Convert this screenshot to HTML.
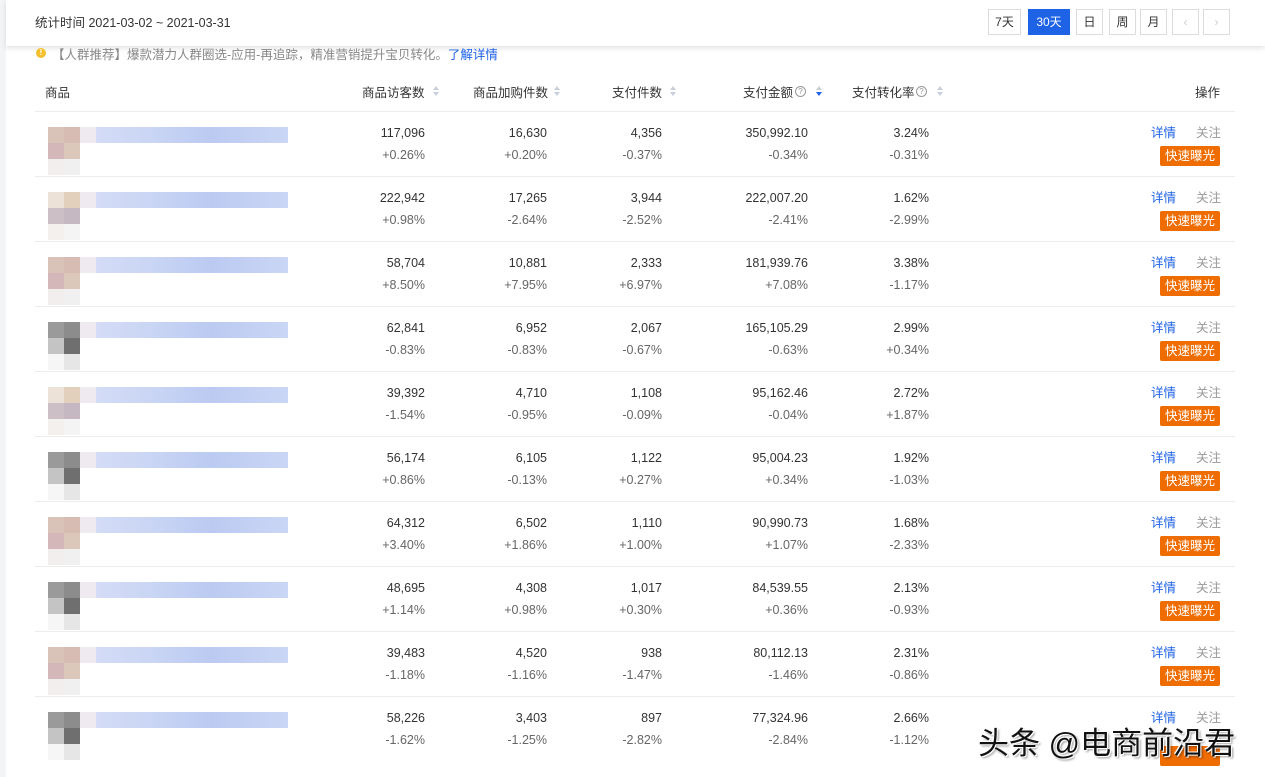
<!DOCTYPE html>
<html><head><meta charset="utf-8"><style>
*{margin:0;padding:0;box-sizing:border-box}
body{width:1265px;height:777px;background:#fff;position:relative;overflow:hidden;font-family:"Liberation Sans","Noto Sans CJK SC",sans-serif;font-size:12px;color:#333}
.a{position:absolute;white-space:nowrap}
.top{position:absolute;left:6px;top:0;width:1259px;height:46px;background:#fff;box-shadow:0 2px 5px rgba(0,0,0,.12)}
.lstrip{position:absolute;left:0;top:0;width:6px;height:777px;background:#f3f4f6}
.btn{position:absolute;top:9px;height:26px;border:1px solid #dcdcdc;background:#fff;font-size:12px;text-align:center;line-height:24px;color:#333}
.sort{position:absolute;width:6px;height:12px}
.sort:before{content:"";position:absolute;left:0;top:0;border:3px solid transparent;border-bottom:4px solid #c7cfdb;border-top:0}
.sort:after{content:"";position:absolute;left:0;top:6px;border:3px solid transparent;border-top:4px solid #c7cfdb;border-bottom:0}
.sort.d:after{border-top-color:#1e62e6}
.q{position:absolute;width:11px;height:11px;border:1px solid #999;border-radius:50%;font-size:8px;line-height:9px;text-align:center;color:#999}
.line{position:absolute;left:35px;width:1200px;height:1px;background:#ececec}
.n{position:absolute;text-align:right;width:120px;font-size:12.5px}
.n1{color:#333}.n2{color:#666}
.px{position:absolute;width:16px;height:16px}
.bar{position:absolute;left:96px;width:192px;height:16px;background:linear-gradient(90deg,#d4dcf6,#c9d5f4 30%,#bccaf2 60%,#cad6f5)}
.xq{position:absolute;left:1151px;color:#1e62e6;font-size:12.5px}
.gz{position:absolute;left:1196px;color:#999;font-size:12.5px}
.ks{position:absolute;left:1160px;width:60px;height:20px;background:#ef6c00;color:#fff;border-radius:2px;font-size:12.5px;line-height:20px;text-align:center}
</style></head><body>
<div class="lstrip"></div>
<div class="top">
<div class="a" style="left:29px;top:12px;font-size:12.5px;color:#333">统计时间 2021-03-02 ~ 2021-03-31</div>
<div class="btn" style="left:982px;width:33px">7天</div>
<div class="btn" style="left:1022px;width:42px;background:#1e62e6;border-color:#1e62e6;color:#fff">30天</div>
<div class="btn" style="left:1070px;width:27px">日</div>
<div class="btn" style="left:1103px;width:27px">周</div>
<div class="btn" style="left:1134px;width:27px">月</div>
<div class="btn" style="left:1166px;width:27px;color:#ccc">‹</div>
<div class="btn" style="left:1197px;width:27px;color:#ccc">›</div>
</div>
<div class="a" style="left:36px;top:48px;width:10px;height:10px;border-radius:50%;background:#f5c02c;color:#fff;font-size:8px;line-height:10px;text-align:center;font-weight:bold">!</div>
<div class="a" style="left:52px;top:44px;font-size:12.5px;color:#888">【人群推荐】爆款潜力人群圈选-应用-再追踪，精准营销提升宝贝转化。<span style="color:#1e62e6">了解详情</span></div>
<div class="a" style="left:45px;top:82px;font-size:12.5px">商品</div>
<div class="a" style="left:362px;top:82px;font-size:12.5px">商品访客数</div><div class="sort" style="left:433px;top:86px"></div>
<div class="a" style="left:473px;top:82px;font-size:12.5px">商品加购件数</div><div class="sort" style="left:554px;top:86px"></div>
<div class="a" style="left:612px;top:82px;font-size:12.5px">支付件数</div><div class="sort" style="left:670px;top:86px"></div>
<div class="a" style="left:743px;top:82px;font-size:12.5px">支付金额</div><div class="q" style="left:795px;top:86px">?</div><div class="sort d" style="left:816px;top:86px"></div>
<div class="a" style="left:852px;top:82px;font-size:12.5px">支付转化率</div><div class="q" style="left:916px;top:86px">?</div><div class="sort" style="left:937px;top:86px"></div>
<div class="a" style="left:1195px;top:82px;font-size:12.5px">操作</div>
<div class="line" style="top:111px"></div>

<div id="rows"></div>
<script>
var d=[["117,096","+0.26%","16,630","+0.20%","4,356","-0.37%","350,992.10","-0.34%","3.24%","-0.31%","p"],
["222,942","+0.98%","17,265","-2.64%","3,944","-2.52%","222,007.20","-2.41%","1.62%","-2.99%","b"],
["58,704","+8.50%","10,881","+7.95%","2,333","+6.97%","181,939.76","+7.08%","3.38%","-1.17%","p"],
["62,841","-0.83%","6,952","-0.83%","2,067","-0.67%","165,105.29","-0.63%","2.99%","+0.34%","g"],
["39,392","-1.54%","4,710","-0.95%","1,108","-0.09%","95,162.46","-0.04%","2.72%","+1.87%","b"],
["56,174","+0.86%","6,105","-0.13%","1,122","+0.27%","95,004.23","+0.34%","1.92%","-1.03%","g"],
["64,312","+3.40%","6,502","+1.86%","1,110","+1.00%","90,990.73","+1.07%","1.68%","-2.33%","p"],
["48,695","+1.14%","4,308","+0.98%","1,017","+0.30%","84,539.55","+0.36%","2.13%","-0.93%","g"],
["39,483","-1.18%","4,520","-1.16%","938","-1.47%","80,112.13","-1.46%","2.31%","-0.86%","p"],
["58,226","-1.62%","3,403","-1.25%","897","-2.82%","77,324.96","-2.84%","2.66%","-1.12%","g"]];
var C={p:["#d9c2b8","#d6bcb3","#d4b8b9","#dcc8bb","#f2eeee","#f0f0f0"],b:["#ece2d8","#e2d0bd","#cdbfc6","#c5b8c2","#f4f0ee","#f4f4f4"],g:["#9a9a9a","#8c8c8c","#c4c4c4","#6f6f6f","#f6f6f6","#e6e6e6"]};
var R=[425,547,662,808,929],h="";
d.forEach(function(r,i){var t=111+65*i,c=C[r[10]];
h+='<div class="px" style="left:48px;top:'+(t+16)+'px;background:'+c[0]+'"></div><div class="px" style="left:64px;top:'+(t+16)+'px;background:'+c[1]+'"></div><div class="px" style="left:48px;top:'+(t+32)+'px;background:'+c[2]+'"></div><div class="px" style="left:64px;top:'+(t+32)+'px;background:'+c[3]+'"></div><div class="px" style="left:48px;top:'+(t+48)+'px;background:'+c[4]+'"></div><div class="px" style="left:64px;top:'+(t+48)+'px;background:'+c[5]+'"></div><div class="px" style="left:80px;top:'+(t+16)+'px;background:#eeeaf0"></div>';
h+='<div class="bar" style="top:'+(t+16)+'px"></div>';
for(var k=0;k<5;k++){h+='<div class="n n1" style="left:'+(R[k]-120)+'px;top:'+(t+15)+'px">'+r[2*k]+'</div><div class="n n2" style="left:'+(R[k]-120)+'px;top:'+(t+37)+'px">'+r[2*k+1]+'</div>';}
h+='<div class="xq" style="top:'+(t+11)+'px">详情</div><div class="gz" style="top:'+(t+11)+'px">关注</div>';
if(i<9)h+='<div class="ks" style="top:'+(t+35)+'px">快速曝光</div>';
if(i<9)h+='<div class="line" style="top:'+(t+65)+'px"></div>';});
document.getElementById('rows').innerHTML=h;
</script>
<div class="a" style="left:1160px;top:746px;width:60px;height:20px;background:#ef6c00;border-radius:2px"></div>
<div class="a" style="left:978px;top:718px;font-size:31px;color:#111;text-shadow:1px 1px 0 #fff,-1px -1px 0 #fff,2px 2px 2px rgba(0,0,0,.4)">头条 @电商前沿君</div>
</body></html>
